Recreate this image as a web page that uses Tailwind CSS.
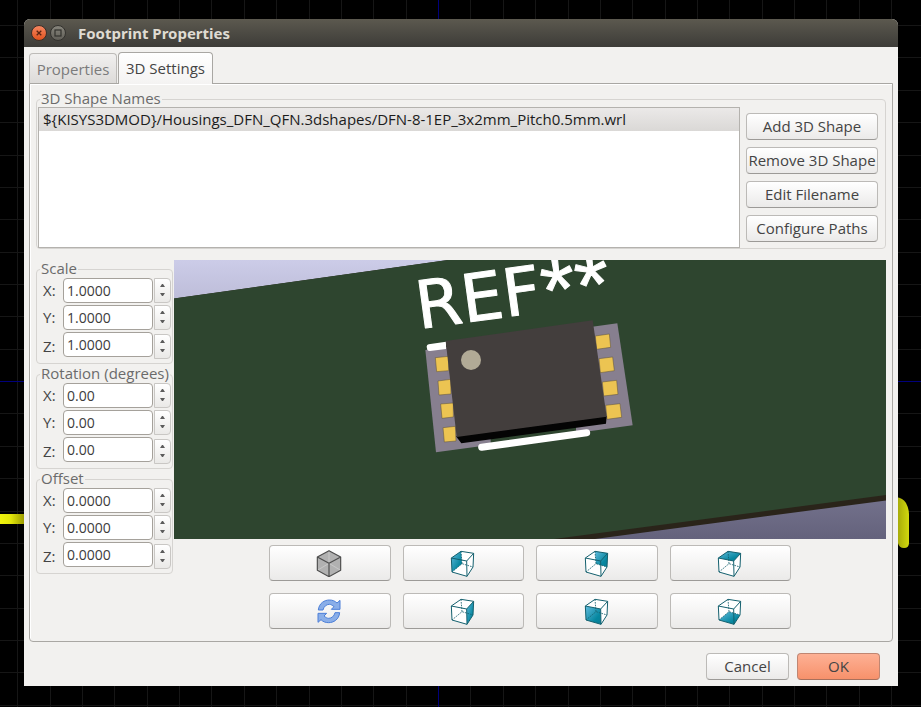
<!DOCTYPE html>
<html lang="en">
<head>
<meta charset="utf-8">
<meta name="viewport" content="width=device-width, initial-scale=1">
<title>Footprint Properties</title>
<script src="https://cdn.jsdelivr.net/npm/@tailwindcss/browser@4"></script>
</head>
<body class="relative min-h-screen bg-black px-6 pt-[19px] pb-5 font-['Open_Sans','Noto_Sans',sans-serif] text-[15px] leading-5 text-[#444444]">

<!-- Layout canvas grid behind the dialog -->
<svg class="absolute inset-0 h-full w-full" aria-hidden="true">
  <defs>
    <linearGradient id="trackL"><stop offset="0" stop-color="#f0f40c"/><stop offset="0.45" stop-color="#e2e60a"/><stop offset="1" stop-color="#9c9c00"/></linearGradient>
    <linearGradient id="trackR"><stop offset="0" stop-color="#a0a408"/><stop offset="1" stop-color="#d2d80e"/></linearGradient>
  </defs>
  <path stroke="#161616" d="M17.5 0v2000M50.5 0v2000M82.5 0v2000M114.5 0v2000M147.5 0v2000M179.5 0v2000M211.5 0v2000M244.5 0v2000M276.5 0v2000M309.5 0v2000M341.5 0v2000M373.5 0v2000M406.5 0v2000M470.5 0v2000M503.5 0v2000M535.5 0v2000M568.5 0v2000M600.5 0v2000M632.5 0v2000M665.5 0v2000M697.5 0v2000M729.5 0v2000M762.5 0v2000M794.5 0v2000M826.5 0v2000M859.5 0v2000M891.5 0v2000"/>
  <path stroke="#161616" d="M0 25.5h3000M0 57.5h3000M0 90.5h3000M0 122.5h3000M0 155.5h3000M0 187.5h3000M0 219.5h3000M0 252.5h3000M0 284.5h3000M0 316.5h3000M0 349.5h3000M0 413.5h3000M0 446.5h3000M0 478.5h3000M0 511.5h3000M0 543.5h3000M0 575.5h3000M0 608.5h3000M0 640.5h3000M0 672.5h3000M0 705.5h3000"/>
  <path stroke="#00007c" d="M438.5 0v2000M0 381.5h3000"/>
  <rect x="0" y="514" width="24" height="10" fill="url(#trackL)"/>
  <path fill="url(#trackR)" d="M896 497q7 1 10 6q3 6 3 11v29q0 5-5 5t-6-5z"/>
</svg>

<main class="relative -mr-px overflow-hidden rounded-t-md bg-[#f2f1ef]" role="dialog" aria-labelledby="dlg-title">
  <header class="flex h-7 items-center bg-linear-to-b from-[#5c594f] to-[#3d3c38] pl-[7px]">
    <button type="button" aria-label="Close" class="mr-[3px] size-4">
      <svg viewBox="0 0 16 16" class="size-4"><defs><linearGradient id="cl" x2="0" y2="1"><stop offset="0" stop-color="#f58863"/><stop offset="1" stop-color="#e0511c"/></linearGradient></defs><circle cx="8" cy="8" r="7.5" fill="url(#cl)" stroke="#3a2f29"/><path d="M5.7 5.7l4.6 4.6M10.3 5.7l-4.6 4.6" stroke="#5a2412" stroke-width="1.3"/></svg>
    </button>
    <button type="button" aria-label="Maximize" class="mr-3 size-4">
      <svg viewBox="0 0 16 16" class="size-4"><defs><linearGradient id="mx" x2="0" y2="1"><stop offset="0" stop-color="#88867d"/><stop offset="1" stop-color="#5f5d56"/></linearGradient></defs><circle cx="8" cy="8" r="7.5" fill="url(#mx)" stroke="#33322e"/><rect x="5" y="5" width="6" height="6" fill="none" stroke="#33322e" stroke-width="1.2"/></svg>
    </button>
    <h1 id="dlg-title" class="font-['Noto_Sans',sans-serif] font-bold text-[#dfdbd2]">Footprint Properties</h1>
  </header>

  <div class="px-[5px] pt-[5px]">
    <div class="relative z-10 -mb-px flex items-end gap-px" role="tablist">
      <button type="button" role="tab" aria-selected="false" class="mb-px h-[30px] w-[88px] rounded-t border border-b-0 border-[#bdbbb8] bg-linear-to-b from-[#f1f0ef] to-[#dddbd9] text-[#7b7b7b]">Properties</button>
      <button type="button" role="tab" aria-selected="true" class="h-8 w-[95px] rounded-t border border-b-0 border-[#a9a7a3] bg-linear-to-b from-white to-[#f4f3f2] pb-0.5">3D Settings</button>
    </div>

    <section role="tabpanel" class="rounded-b border border-[#a9a7a3] px-1.5 pt-[7px] pb-3 shadow-[inset_1px_1px_0_#fff]">
      <fieldset class="rounded border border-[#d6d4d1] pr-[7px] pl-px">
        <legend class="ml-0.5 px-px pb-0.5 leading-[14px] text-[#6b6b6b]">3D Shape Names</legend>
        <div class="flex gap-1.5">
          <ul role="listbox" aria-label="3D Shape Names" class="h-[141px] min-w-0 flex-1 border border-[#b4b2ae] bg-white text-[#1c1c1c]">
            <li role="option" aria-selected="true" class="h-[23px] truncate bg-linear-to-b from-[#ebe9e8] to-[#dad8d6] px-1 leading-[23px]">${KISYS3DMOD}/Housings_DFN_QFN.3dshapes/DFN-8-1EP_3x2mm_Pitch0.5mm.wrl</li>
          </ul>
          <div class="flex w-[132px] flex-col gap-[7px] pt-1.5">
            <button type="button" class="h-[27px] rounded border border-[#bcbab7] border-b-[#9c9a97] bg-linear-to-b from-white to-[#ebeae9] pb-0.5 whitespace-nowrap">Add 3D Shape</button>
            <button type="button" class="h-[27px] rounded border border-[#bcbab7] border-b-[#9c9a97] bg-linear-to-b from-white to-[#ebeae9] pb-0.5 whitespace-nowrap">Remove 3D Shape</button>
            <button type="button" class="h-[27px] rounded border border-[#bcbab7] border-b-[#9c9a97] bg-linear-to-b from-white to-[#ebeae9] pb-0.5 whitespace-nowrap">Edit Filename</button>
            <button type="button" class="h-[27px] rounded border border-[#bcbab7] border-b-[#9c9a97] bg-linear-to-b from-white to-[#ebeae9] pb-0.5 whitespace-nowrap">Configure Paths</button>
          </div>
        </div>
      </fieldset>

      <div class="mt-[11px] flex gap-px">
        <div id="groups" class="flex w-[137px] flex-col gap-0.5 pt-px"></div>

        <div class="min-w-0 flex-1">
          <svg class="block h-[279px] w-full" viewBox="174 260 712 279" preserveAspectRatio="xMidYMid slice" role="img" aria-label="3D preview">
            <defs>
              <linearGradient id="sky" x2="0" y2="1"><stop offset="0" stop-color="#cccce8"/><stop offset="1" stop-color="#64627c"/></linearGradient>
            </defs>
            <rect x="174" y="260" width="712" height="279" fill="url(#sky)"/>
            <path fill="#2a241a" d="M174 298.6L448 260H886V500.4L595 539H174z"/>
            <path fill="#2e452f" d="M174 298.6L448 260H886V495L554 539H174z"/>
            <text transform="translate(419 329) rotate(-7.8)" font-family="DejaVu Sans" font-size="66" fill="#fff" stroke="#fff" stroke-width="1" stroke-linejoin="round">REF<tspan dx="1" dy="10" font-family="Liberation Sans" font-size="88">**</tspan></text>
            <g transform="translate(400 250) scale(.33333)">
              <path fill="#877f8f" d="M76 300L652 220L698 526L108 607z"/>
              <path fill="#2e452f" d="M272 560L528 530V550L272 584z"/>
              <path fill="#fff" d="M80 290q0-6 6-7L138 275V297L90 303q-6 0-8-4z"/>
              <path fill="#ecc452" stroke="#5d5136" stroke-width="1.5" d="M106 323L146 319V362L110 365zM114 393L152 388L153 432L117 435zM122 462L160 459V501L126 505zM129 533L166 529L168 573L133 576zM586 258L628 252L632 292L590 298zM597 326L638 321L643 362L601 368zM607 396L650 391L654 433L611 438zM617 466L660 461L665 502L621 508z"/>
              <path fill="#040404" d="M168 559L620 498L618 521L184 580z"/>
              <path fill="#433e3d" d="M137 273L578 211L620 500L170 561z"/>
              <circle cx="213" cy="330" r="30" fill="#b1aa96"/>
              <path stroke="#fff" stroke-width="21" stroke-linecap="round" d="M245 592L560 548"/>
            </g>
          </svg>
          <div id="views" class="mx-auto mt-1.5 grid max-w-[522px] grid-cols-4 gap-3"></div>
        </div>
      </div>
    </section>

    <footer class="flex justify-end gap-2 pt-[11px] pr-[13px] pb-1.5">
      <button type="button" class="h-[27px] w-[83px] rounded border border-[#bcbab7] border-b-[#9c9a97] bg-linear-to-b from-white to-[#ebeae9] pb-0.5">Cancel</button>
      <button type="button" class="h-[27px] w-[83px] rounded border border-[#c08672] border-b-[#a8705c] bg-linear-to-b from-[#fdb094] to-[#f7916b] pb-0.5">OK</button>
    </footer>
  </div>
</main>

<svg class="absolute size-0" aria-hidden="true">
  <defs>
    <linearGradient id="face" x2="1" y2="1"><stop offset="0" stop-color="#62bbdd"/><stop offset="0.7" stop-color="#0687a0"/><stop offset="1" stop-color="#0b7d94"/></linearGradient>
  </defs>
</svg>

<script>
  // Transform groups: legend and initial value of each axis
  const groups = [["Scale", "1.0000"], ["Rotation (degrees)", "0.00"], ["Offset", "0.0000"]];
  document.getElementById("groups").innerHTML = groups.map(([name, value], g) => `
    <fieldset class="rounded border border-[#d6d4d1] pt-px pr-px pb-1 pl-1.5">
      <legend class="-ml-[3px] px-px pb-0.5 leading-[14px] whitespace-nowrap text-[#6b6b6b]">${name}</legend>
      ${["X", "Y", "Z"].map((axis, i) => `
      <div class="flex h-[27px] ${i === 2 ? "items-end" : "items-start"}">
        <label for="f${g}${axis}" class="w-5 leading-[25px]">${axis}:</label>
        <input id="f${g}${axis}" type="text" value="${value}" class="h-[25px] w-[90px] self-start rounded border border-[#a5a19b] bg-white px-[3px] text-[14px] leading-5 text-[#3c3c3c]">
        <span class="ml-px flex h-[25px] w-[17px] flex-col rounded-r border border-[#c9c7c4] bg-linear-to-b from-white to-[#eae9e7] pt-0.5 pb-[3px]">
          <button type="button" aria-label="Increase ${name} ${axis}" class="flex flex-1 items-center justify-center"><svg class="h-[3px] w-[5px]" viewBox="0 0 5 3"><path fill="#5c5c5c" d="M0 3L2 0h1L5 3z"/></svg></button>
          <button type="button" aria-label="Decrease ${name} ${axis}" class="flex flex-1 items-center justify-center"><svg class="h-[3px] w-[5px]" viewBox="0 0 5 3"><path fill="#5c5c5c" d="M0 0h5L3 3h-1z"/></svg></button>
        </span>
      </div>`).join("")}
    </fieldset>`).join("");

  // Wireframe cube with one highlighted face
  const faces = {
    left: "M7 27L36 7L39 44L9 69z",
    back: "M36 7L74 13L72 54L39 44z",
    top: "M7 27L36 7L74 13L53 36z",
    right: "M53 36L74 13L72 54L54 82z",
    front: "M7 27L53 36L54 82L9 69z",
    bottom: "M9 69L39 44L72 54L54 82z"
  };
  const cube = face => `<path fill="#fff" d="M7 27L36 7L74 13L72 54L54 82L9 69z"/>
    <path fill="url(#face)" d="${faces[face]}"/>
    <g fill="none" stroke="#14606e" stroke-width="3" stroke-linejoin="round">
      <path stroke-dasharray="5 3" stroke-width="2.500" d="M36 7L39 44M9 69L39 44L72 54"/>
      <path d="M7 27L53 36L54 82L9 69zM7 27L36 7L74 13L53 36M74 13L72 54L54 82"/>
    </g>`;
  const iso = `<path fill="#b1b1b1" d="M39 5L74 24V64L39 83L4 64V24z"/>
    <path fill="none" stroke="#cdcdcd" stroke-width="2.500" d="M39 5V43M39 43L4 64M39 43L74 64"/>
    <path fill="none" stroke="#4d4d4d" stroke-width="3.500" stroke-linejoin="round" d="M39 5L74 24V64L39 83L4 64V24zM4 24L39 43L74 24M39 43V83"/>`;
  const arrow = "M7 39C9 18 26 9 40 9C50 9 57 12 63 18L72 10V37H46L54 29C49 25 45 22 40 22C31 22 23 29 21 39z";
  const refresh = `<g fill="#8aaee8" stroke="#4c7fd8" stroke-width="3" stroke-linejoin="round"><path d="${arrow}"/><path transform="rotate(180 39 43)" d="${arrow}"/></g>`;
  const views = [["Isometric view", iso], ["Left view", cube("left")], ["Back view", cube("back")], ["Top view", cube("top")],
    ["Refresh", refresh], ["Right view", cube("right")], ["Front view", cube("front")], ["Bottom view", cube("bottom")]];
  document.getElementById("views").innerHTML = views.map(([label, art]) => `
    <button type="button" aria-label="${label}" class="flex h-9 items-center justify-center rounded border border-[#bcbab7] border-b-[#9c9a97] bg-linear-to-b from-white to-[#ebeae9] pr-0.5 pb-px">
      <svg class="h-7 w-[26px]" viewBox="0 0 78 84">${art}</svg>
    </button>`).join("");
</script>
</body>
</html>
